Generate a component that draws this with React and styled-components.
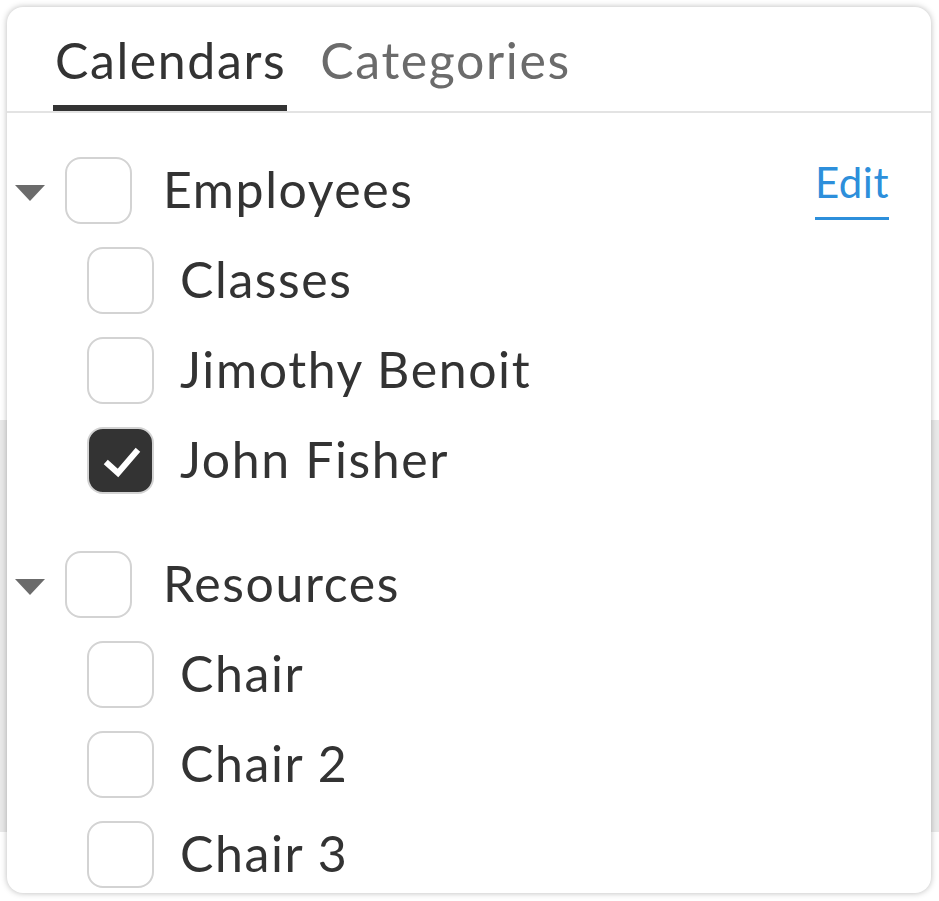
import React from "react";
import styled, { createGlobalStyle } from "styled-components";

const GlobalStyle = createGlobalStyle`
  html, body {
    margin: 0;
    padding: 0;
  }
  body {
    background: linear-gradient(
      to bottom,
      #ffffff 0,
      #ffffff 420px,
      #e9e9e9 420px,
      #e9e9e9 832px,
      #ffffff 832px
    );
    min-height: 901px;
    font-family: Lato, "Liberation Sans", sans-serif;
  }
`;

const Page = styled.div`
  padding: 7px 8px 8px 7px;
  box-sizing: border-box;
  width: 939px;
  height: 901px;
`;

const Card = styled.div`
  width: 924px;
  height: 886px;
  background: #fff;
  border-radius: 16px;
  box-shadow: 0 0 6px rgba(0, 0, 0, 0.28);
  overflow: hidden;
  display: flex;
  flex-direction: column;
`;

const TabBar = styled.div`
  box-sizing: border-box;
  height: 106px;
  flex: none;
  display: flex;
  align-items: flex-end;
  gap: 31px;
  padding-left: 46px;
  border-bottom: 2px solid #e3e3e3;
`;

const Tab = styled.div`
  font-size: 50px;
  letter-spacing: 1.6px;
  line-height: 1;
  padding: 0 1px 20px 2px;
  border-bottom: 6px solid ${(p) => (p.$active ? "#333333" : "transparent")};
  color: ${(p) => (p.$active ? "#333333" : "#6b6b6b")};
  white-space: nowrap;
`;

const List = styled.div`
  padding-top: 32px;
  display: flex;
  flex-direction: column;
`;

const Group = styled.div`
  display: flex;
  flex-direction: column;
  margin-bottom: 34px;
`;

const Row = styled.div`
  height: 90px;
  flex: none;
  display: flex;
  align-items: center;
  padding-left: ${(p) => (p.$child ? "80px" : "8px")};
  padding-right: 42px;
`;

const Caret = styled.span`
  width: 0;
  height: 0;
  border-left: 15px solid transparent;
  border-right: 15px solid transparent;
  border-top: 16px solid #6b6b6b;
  margin-top: 6px;
  margin-right: 20px;
  flex: none;
`;

const Box = styled.span`
  box-sizing: border-box;
  width: 67px;
  height: 67px;
  flex: none;
  border-radius: 16px;
  border: 2px solid #d3d3d3;
  background: ${(p) => (p.$checked ? "#333333" : "#ffffff")};
  display: flex;
  align-items: center;
  justify-content: center;
`;

const Label = styled.span`
  font-size: 50px;
  letter-spacing: 1.6px;
  line-height: 1;
  color: #333333;
  margin-top: -3px;
  margin-left: ${(p) => (p.$child ? "26px" : "31px")};
  white-space: nowrap;
`;

const EditLink = styled.a`
  margin-left: auto;
  font-size: 42px;
  letter-spacing: 0.5px;
  line-height: 1;
  color: #2d8fdb;
  text-decoration: none;
  padding-bottom: 14px;
  border-bottom: 3px solid #2d8fdb;
`;

const Check = () => (
  <svg width="44" height="44" viewBox="0 0 44 44" fill="none">
    <path
      d="M9 26 L19 35 L37 14"
      stroke="#ffffff"
      strokeWidth="6"
      strokeLinecap="square"
      strokeLinejoin="miter"
    />
  </svg>
);

const groups = [
  {
    name: "Employees",
    edit: true,
    items: [
      { name: "Classes" },
      { name: "Jimothy Benoit" },
      { name: "John Fisher", checked: true },
    ],
  },
  {
    name: "Resources",
    items: [{ name: "Chair" }, { name: "Chair 2" }, { name: "Chair 3" }],
  },
];

export default function App() {
  return (
    <>
      <GlobalStyle />
      <Page>
        <Card>
          <TabBar>
            <Tab $active>Calendars</Tab>
            <Tab>Categories</Tab>
          </TabBar>
          <List>
            {groups.map((g) => (
              <Group key={g.name}>
                <Row>
                  <Caret />
                  <Box />
                  <Label>{g.name}</Label>
                  {g.edit && <EditLink href="#">Edit</EditLink>}
                </Row>
                {g.items.map((it) => (
                  <Row $child key={it.name}>
                    <Box $checked={it.checked}>{it.checked && <Check />}</Box>
                    <Label $child>{it.name}</Label>
                  </Row>
                ))}
              </Group>
            ))}
          </List>
        </Card>
      </Page>
    </>
  );
}
